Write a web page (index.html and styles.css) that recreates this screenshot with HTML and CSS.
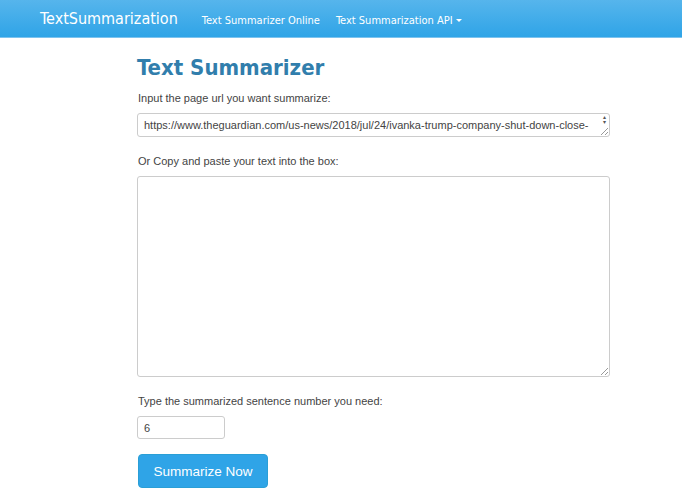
FILE: index.html
```html
<!DOCTYPE html>
<html>
<head>
<meta charset="utf-8">
<link rel="stylesheet" href="styles.css">
</head>
<body>
<nav class="navbar">
  <a class="brand">TextSummarization</a>
  <ul class="nav">
    <li><a>Text Summarizer Online</a></li>
    <li><a>Text Summarization API<span class="caret"></span></a></li>
  </ul>
</nav>
<main class="content">
  <h1 class="title">Text Summarizer</h1>
  <form class="form">
    <label class="label">Input the page url you want summarize:</label>
    <div class="url-box">https://www.theguardian.com/us-news/2018/jul/24/ivanka-trump-company-shut-down-close-<span class="spin">&#9652;<br>&#9662;</span><span class="grip"></span></div>
    <label class="label">Or Copy and paste your text into the box:</label>
    <div class="text-box"><span class="grip"></span></div>
    <label class="label">Type the summarized sentence number you need:</label>
    <div class="num-box">6</div>
    <button type="button" class="btn">Summarize Now</button>
  </form>
</main>
</body>
</html>
```
FILE: styles.css
```css
html, body { margin: 0; padding: 0; background: #fff; }
body { font-family: "Liberation Sans", Arial, sans-serif; color: #555; }
.navbar {
  height: 38px;
  box-sizing: border-box;
  background: linear-gradient(to bottom, #56b5ec, #2fa4e7);
  border-bottom: 1px solid #7dc3ee;
  display: flex;
  align-items: center;
  padding-left: 40px;
}
.brand {
  font-family: "DejaVu Sans Condensed", "DejaVu Sans", sans-serif;
  font-size: 16px;
  color: #fff;
  margin-right: 24px;
}
.nav { list-style: none; margin: 0; padding: 0; display: flex; gap: 16px; }
.nav a {
  font-family: "DejaVu Sans Condensed", "DejaVu Sans", sans-serif;
  font-size: 11px;
  color: #fff;
}
.caret {
  display: inline-block;
  width: 0; height: 0;
  border-left: 3px solid transparent;
  border-right: 3px solid transparent;
  border-top: 3px solid #fff;
  margin-left: 3px;
  vertical-align: middle;
}
.content { padding-left: 137px; width: 473px; }
.title {
  font-family: "DejaVu Sans Condensed", "DejaVu Sans", sans-serif;
  font-weight: 600;
  font-size: 22px;
  color: #317eac;
  margin: 15px 0 0;
  line-height: 30px;
}
.form { display: flex; flex-direction: column; align-items: flex-start; }
.label { font-size: 11px; line-height: 14px; margin: 8px 0 8px 1px; color: #444; }
.url-box, .text-box, .num-box {
  box-sizing: border-box;
  border: 1px solid #ccc;
  border-radius: 3px;
  font-size: 11px;
  color: #444;
  position: relative;
  background: #fff;
}
.url-box { width: 473px; height: 24px; padding: 5px 6px; margin-bottom: 9px; }
.text-box { width: 473px; height: 201px; margin-bottom: 9px; }
.num-box { width: 88px; height: 23px; padding: 5px 6px; margin-bottom: 15px; }
.spin {
  position: absolute; right: 3px; top: 1px;
  font-size: 6px; line-height: 5px; color: #555;
}
.grip {
  position: absolute; right: 1px; bottom: 1px; width: 7px; height: 7px;
  background: linear-gradient(135deg, transparent 45%, #999 45%, #999 55%, transparent 55%, transparent 72%, #999 72%, #999 82%, transparent 82%);
}
.btn {
  width: 130px; height: 34px;
  margin-left: 1px;
  background: #2fa4e7;
  border: 1px solid #2a9fd6;
  border-radius: 4px;
  color: #fff;
  font-family: "Liberation Sans", Arial, sans-serif;
  font-size: 13.5px;
  padding: 0;
}
```
